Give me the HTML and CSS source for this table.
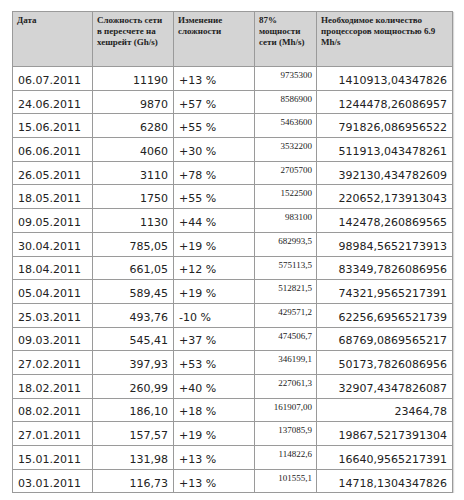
FILE: index.html
```html
<!DOCTYPE html>
<html lang="ru">
<head>
    <meta charset="UTF-8">
    <title>Сложность сети</title>
    <link rel="stylesheet" href="styles.css">
</head>
<body>
    <table class="stats">
        <colgroup>
            <col class="c-date">
            <col class="c-diff">
            <col class="c-change">
            <col class="c-power">
            <col class="c-cpu">
        </colgroup>
        <thead>
            <tr>
                <th>Дата</th>
                <th>Сложность сети в пересчете на хешрейт (Gh/s)</th>
                <th>Изменение сложности</th>
                <th>87% мощности сети (Mh/s)</th>
                <th>Необходимое количество процессоров мощностью 6.9 Mh/s</th>
            </tr>
        </thead>
        <tbody>
            <tr><td>06.07.2011</td><td class="num">11190</td><td>+13 %</td><td class="small">9735300</td><td class="num">1410913,04347826</td></tr>
            <tr><td>24.06.2011</td><td class="num">9870</td><td>+57 %</td><td class="small">8586900</td><td class="num">1244478,26086957</td></tr>
            <tr><td>15.06.2011</td><td class="num">6280</td><td>+55 %</td><td class="small">5463600</td><td class="num">791826,086956522</td></tr>
            <tr><td>06.06.2011</td><td class="num">4060</td><td>+30 %</td><td class="small">3532200</td><td class="num">511913,043478261</td></tr>
            <tr><td>26.05.2011</td><td class="num">3110</td><td>+78 %</td><td class="small">2705700</td><td class="num">392130,434782609</td></tr>
            <tr><td>18.05.2011</td><td class="num">1750</td><td>+55 %</td><td class="small">1522500</td><td class="num">220652,173913043</td></tr>
            <tr><td>09.05.2011</td><td class="num">1130</td><td>+44 %</td><td class="small">983100</td><td class="num">142478,260869565</td></tr>
            <tr><td>30.04.2011</td><td class="num">785,05</td><td>+19 %</td><td class="small">682993,5</td><td class="num">98984,5652173913</td></tr>
            <tr><td>18.04.2011</td><td class="num">661,05</td><td>+12 %</td><td class="small">575113,5</td><td class="num">83349,7826086956</td></tr>
            <tr><td>05.04.2011</td><td class="num">589,45</td><td>+19 %</td><td class="small">512821,5</td><td class="num">74321,9565217391</td></tr>
            <tr><td>25.03.2011</td><td class="num">493,76</td><td>-10 %</td><td class="small">429571,2</td><td class="num">62256,6956521739</td></tr>
            <tr><td>09.03.2011</td><td class="num">545,41</td><td>+37 %</td><td class="small">474506,7</td><td class="num">68769,0869565217</td></tr>
            <tr><td>27.02.2011</td><td class="num">397,93</td><td>+53 %</td><td class="small">346199,1</td><td class="num">50173,7826086956</td></tr>
            <tr><td>18.02.2011</td><td class="num">260,99</td><td>+40 %</td><td class="small">227061,3</td><td class="num">32907,4347826087</td></tr>
            <tr><td>08.02.2011</td><td class="num">186,10</td><td>+18 %</td><td class="small">161907,00</td><td class="num">23464,78</td></tr>
            <tr><td>27.01.2011</td><td class="num">157,57</td><td>+19 %</td><td class="small">137085,9</td><td class="num">19867,5217391304</td></tr>
            <tr><td>15.01.2011</td><td class="num">131,98</td><td>+13 %</td><td class="small">114822,6</td><td class="num">16640,9565217391</td></tr>
            <tr><td>03.01.2011</td><td class="num">116,73</td><td>+13 %</td><td class="small">101555,1</td><td class="num">14718,1304347826</td></tr>
        </tbody>
    </table>
</body>
</html>
```

FILE: styles.css
```css
body {
    margin: 0;
    background: #fff;
    color: #222;
}

.stats {
    margin: 11px 0 0 12px;
    width: 440px;
    border-collapse: collapse;
    table-layout: fixed;
    box-shadow: 1px 1px 1px rgba(0, 0, 0, 0.15);
}
.c-date { width: 80px; }
.c-diff { width: 81px; }
.c-change { width: 81px; }
.c-power { width: 62px; }
.c-cpu { width: 136px; }

.stats th,
.stats td {
    border: 1px solid #9a9a9a;
}
.stats th {
    height: 51px;
    padding: 3px 4px 0;
    background: #d4d4d4;
    font: bold 9px/11px "Liberation Serif", "Times New Roman", serif;
    text-align: left;
    vertical-align: top;
}
.stats td {
    height: 23.7px;
    padding: 4px 5px 0;
    box-sizing: border-box;
    font: 11px/13px "DejaVu Sans", Verdana, sans-serif;
    white-space: nowrap;
    vertical-align: middle;
}
.stats td.num {
    text-align: right;
}
.stats td.small {
    padding: 3px 4px 0;
    font: 9px/10px "Liberation Serif", "Times New Roman", serif;
    text-align: right;
    vertical-align: top;
}
```
